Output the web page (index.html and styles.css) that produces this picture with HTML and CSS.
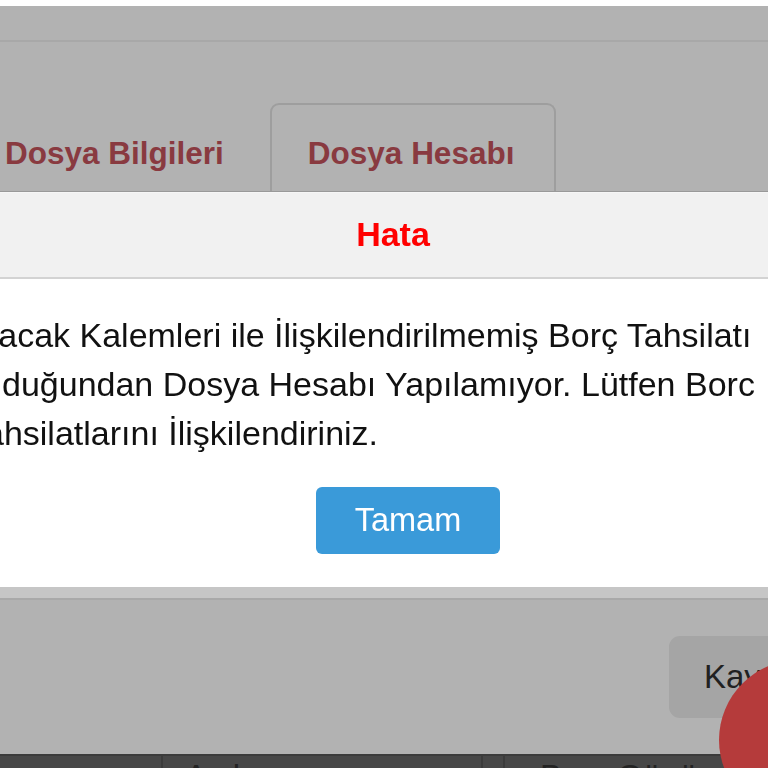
FILE: index.html
```html
<!DOCTYPE html>
<html lang="tr">
<head>
<meta charset="utf-8">
<title>Dosya Hesabı</title>
<link rel="stylesheet" href="styles.css">
</head>
<body>
<div class="page">
  <div class="topbar"></div>
  <div class="tabs">
    <div class="tab">Dosya Bilgileri</div>
    <div class="tab active">Dosya Hesabı</div>
  </div>
  <div class="content"></div>
  <div class="actions">
    <button class="btn-save">Kaydet</button>
  </div>
  <div class="table">
    <div class="cell c1"></div>
    <div class="cell c2">Açık</div>
    <div class="cell c3"></div>
    <div class="cell c4">Borç Günü</div>
  </div>
</div>
<div class="overlay"></div>
<div class="fab"></div>
<div class="dialog">
  <div class="dialog-head">Hata</div>
  <div class="dialog-body">
    <p class="msg">Alacak Kalemleri ile İlişkilendirilmemiş Borç Tahsilatı<br>Olduğundan Dosya Hesabı Yapılamıyor. Lütfen Borc<br>Tahsilatlarını İlişkilendiriniz.</p>
    <div class="dialog-actions">
      <button class="btn-ok">Tamam</button>
    </div>
  </div>
</div>
</body>
</html>
```

FILE: styles.css
```css
html, body {
  margin: 0;
  padding: 0;
  width: 768px;
  height: 768px;
  overflow: hidden;
  background: #ffffff;
  font-family: "Liberation Sans", Arial, sans-serif;
}

.page {
  display: flex;
  flex-direction: column;
  height: 768px;
}

.topbar {
  height: 40px;
  border-bottom: 2px solid #f1f1f1;
  flex: none;
}

.tabs {
  display: flex;
  gap: 4px;
  margin-top: 61px;
  margin-left: -37px;
  border-bottom: 2px solid #dcdcdc;
  flex: none;
}

.tab {
  padding: 30px 40px 20px 40px;
  font-size: 31.5px;
  line-height: 36px;
  font-weight: bold;
  color: #c5545c;
  border: 2px solid transparent;
  border-bottom: none;
  border-radius: 9px 9px 0 0;
  white-space: nowrap;
}

.tab.active {
  border-color: #e3e3e3;
  padding-left: 36px;
  padding-right: 40px;
}

.content {
  flex: 1;
}

.actions {
  flex: none;
  display: flex;
  padding: 37px 0 36px 669px;
}

.btn-save {
  height: 82px;
  padding: 0 35px;
  border: none;
  border-radius: 11px;
  background: #ececec;
  color: #303030;
  font-family: "Liberation Sans", Arial, sans-serif;
  font-size: 33px;
  white-space: nowrap;
}

.table {
  flex: none;
  height: 12px;
  display: flex;
  background: #666666;
  border-top: 2px solid #555555;
  overflow: hidden;
}

.cell {
  color: #333333;
  font-size: 33px;
  line-height: 40px;
  padding-top: 1px;
  white-space: nowrap;
  border-right: 2px solid #555555;
}

.c1 { width: 161px; }
.c2 { width: 296px; padding-left: 22px; }
.c3 { width: 20px; }
.c4 { flex: 1; padding-left: 35px; border-right: none; }

.overlay {
  position: fixed;
  left: 0;
  right: 0;
  top: 6px;
  bottom: 0;
  background: rgba(0, 0, 0, 0.3);
}

.fab {
  position: fixed;
  left: 719px;
  top: 660px;
  width: 160px;
  height: 160px;
  border-radius: 50%;
  background: #b53b3b;
}

.dialog {
  position: fixed;
  left: -46px;
  top: 192px;
  width: 892px;
  background: #ffffff;
  border-top: 1px solid #f6f6f6;
  box-shadow: 0 11px 0 #c6c6c6, 0 13px 0 #a9a9a9;
}

.dialog-head {
  background: #f1f1f1;
  text-align: center;
  padding: 21px 14px 23px 0;
  font-size: 34px;
  line-height: 40px;
  font-weight: bold;
  color: #ff0000;
  border-bottom: 2px solid #d3d3d3;
}

.dialog-body {
  padding: 32px 20px 33px 14px;
}

.msg {
  margin: 0;
  font-size: 34px;
  line-height: 49px;
  color: #111111;
  white-space: nowrap;
}

.dialog-actions {
  display: flex;
  justify-content: center;
  padding-left: 22px;
  margin-top: 29px;
}

.btn-ok {
  width: 184px;
  height: 67px;
  border: none;
  border-radius: 6px;
  background: #3a9ad9;
  color: #ffffff;
  font-family: "Liberation Sans", Arial, sans-serif;
  font-size: 32.5px;
}
```
